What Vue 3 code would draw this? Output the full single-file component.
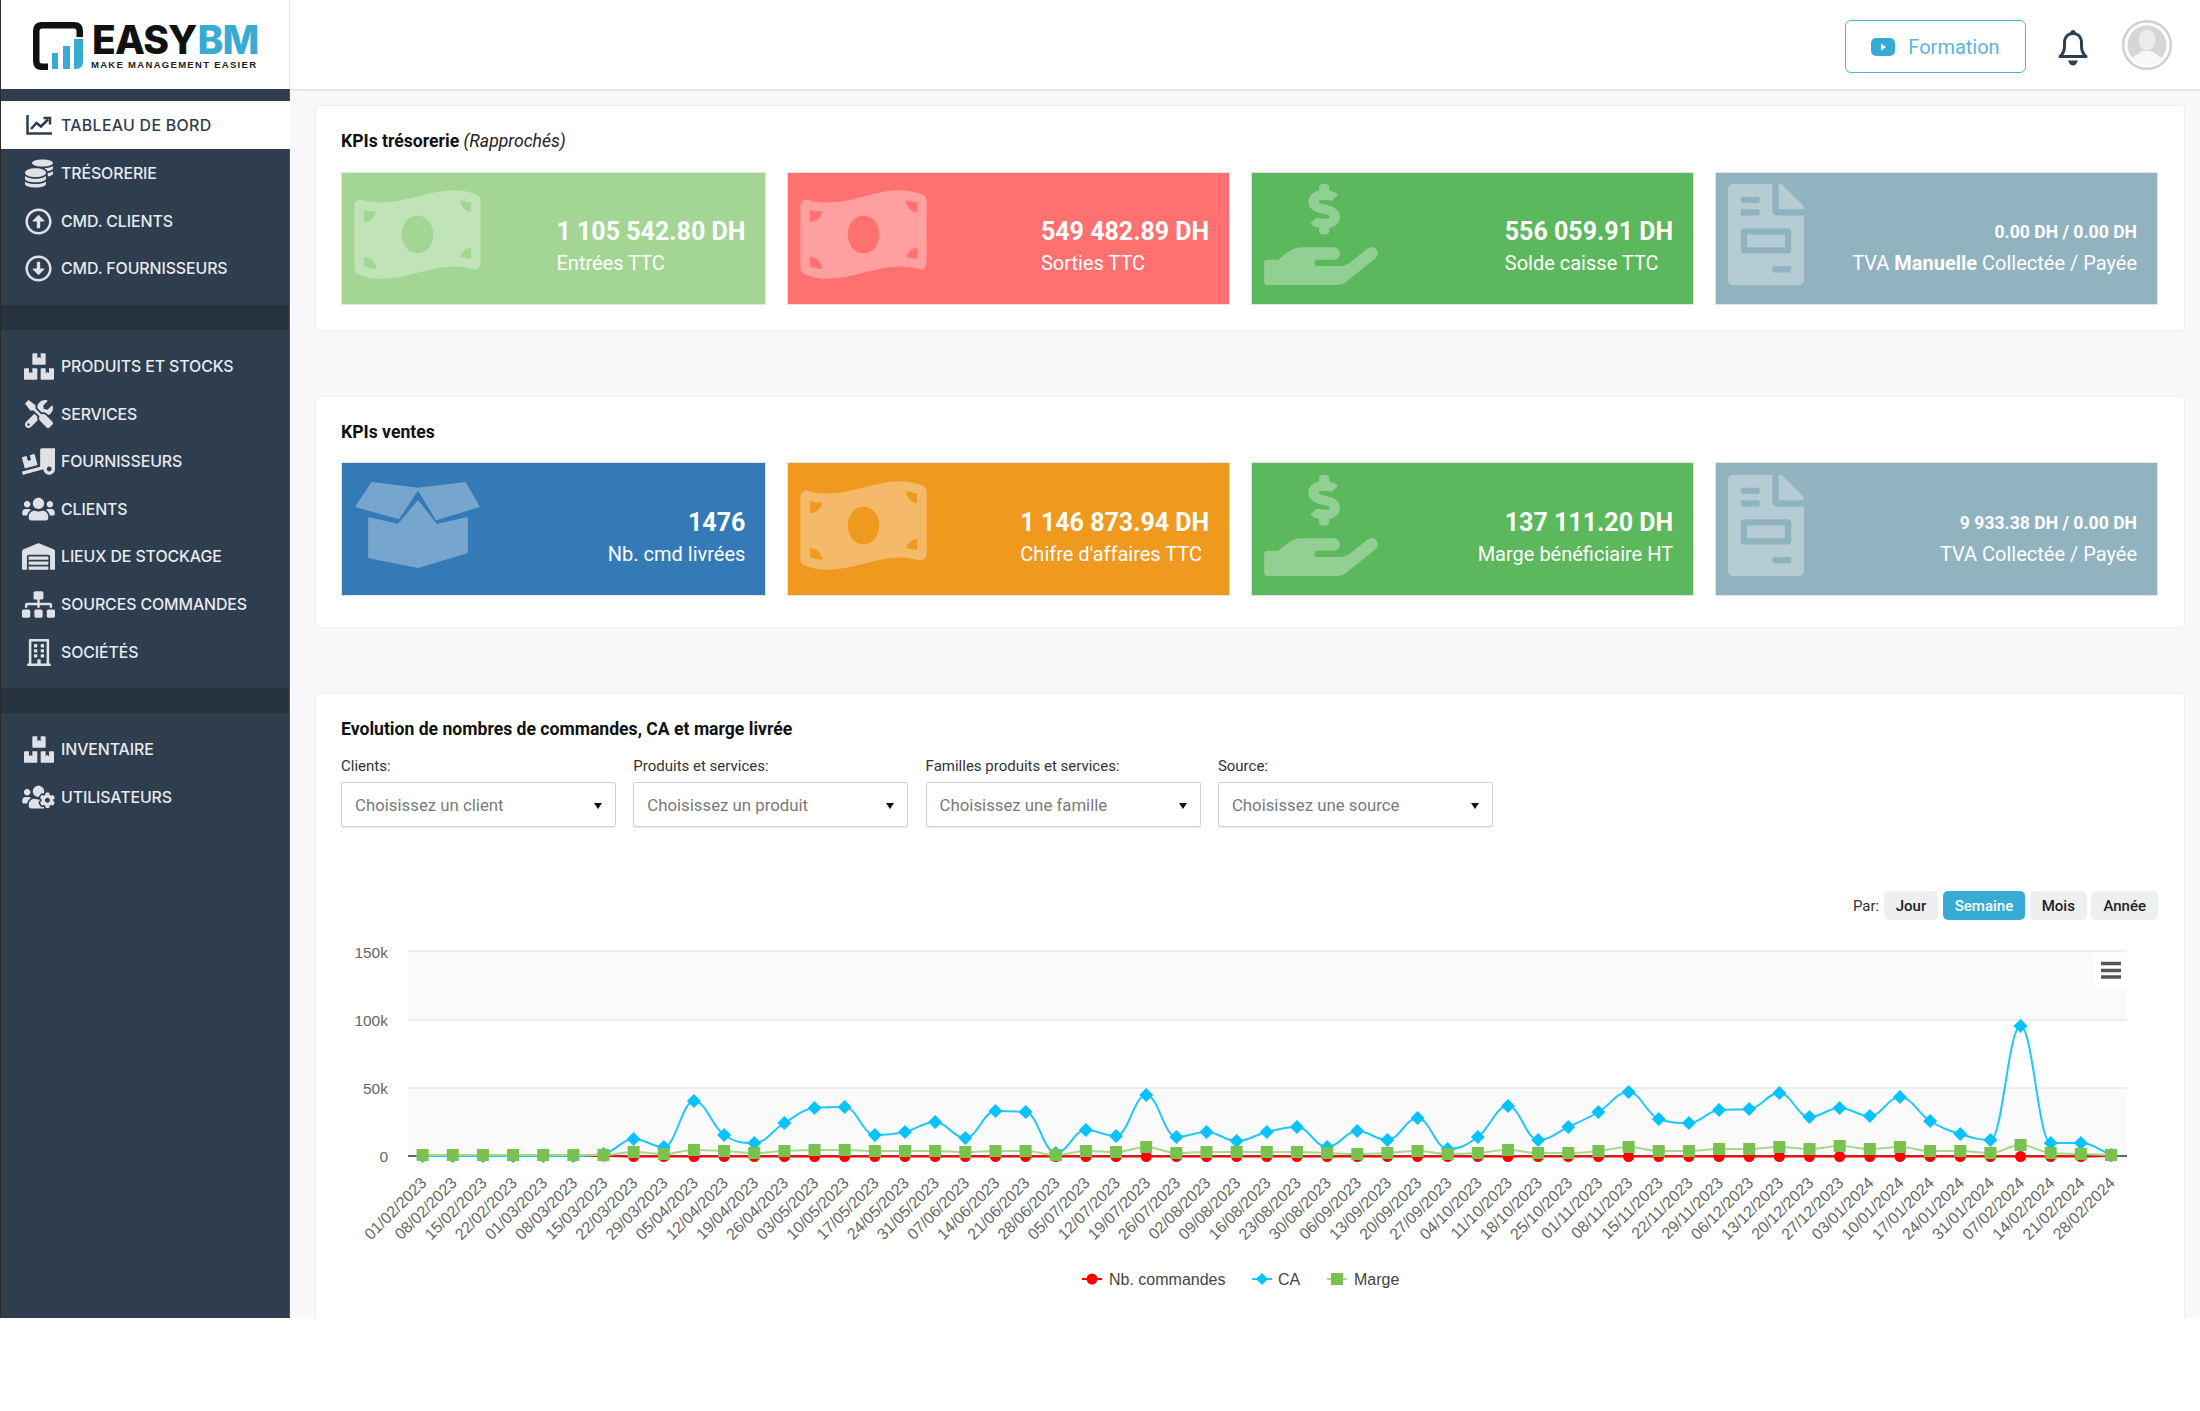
<script setup>
const P = {
  boxes: ['0 0 576 512', 'M560 288h-80v96l-32-21.3-32 21.3v-96h-80c-8.8 0-16 7.2-16 16v192c0 8.8 7.2 16 16 16h224c8.8 0 16-7.2 16-16V304c0-8.8-7.2-16-16-16zm-384-64h224c8.8 0 16-7.2 16-16V16c0-8.8-7.2-16-16-16h-80v96l-32-21.3L256 96V0h-80c-8.8 0-16 7.2-16 16v192c0 8.8 7.2 16 16 16zm64 64h-80v96l-32-21.3L96 384v-96H16c-8.8 0-16 7.2-16 16v192c0 8.8 7.2 16 16 16h224c8.8 0 16-7.2 16-16V304c0-8.8-7.2-16-16-16z'],
  coins: ['0 0 512 512', 'M0 405.3V448c0 35.3 86 64 192 64s192-28.7 192-64v-42.7C342.7 434.4 267.2 448 192 448S41.3 434.4 0 405.3zM320 128c106 0 192-28.7 192-64S426 0 320 0 128 28.7 128 64s86 64 192 64zM0 300.4V352c0 35.3 86 64 192 64s192-28.7 192-64v-51.6c-41.3 34-116.9 51.6-192 51.6S41.3 334.4 0 300.4zm416 11c57.3-11.1 96-31.7 96-55.4v-42.7c-23.2 16.4-57.3 27.6-96 34.5v63.6zM192 160C86 160 0 195.8 0 240s86 80 192 80 192-35.8 192-80-86-80-192-80zm219.3 56.3c60-10.8 100.7-32 100.7-56.3v-42.7c-35.5 25.1-96.5 38.6-160.7 41.8 29.5 14.3 51.2 33.5 60 57.2z'],
  up: ['0 0 512 512', 'M256 504c137 0 248-111 248-248S393 8 256 8 8 119 8 256s111 248 248 248zm0-448c110.5 0 200 89.5 200 200s-89.5 200-200 200S56 366.5 56 256 145.5 56 256 56zm20 328h-40c-6.6 0-12-5.4-12-12V256h-67c-10.7 0-16-12.9-8.5-20.5l99-99c4.7-4.7 12.3-4.7 17 0l99 99c7.6 7.6 2.2 20.5-8.5 20.5h-67v116c0 6.6-5.4 12-12 12z'],
  down: ['0 0 512 512', 'M256 8C119 8 8 119 8 256s111 248 248 248 248-111 248-248S393 8 256 8zm0 448c-110.5 0-200-89.5-200-200S145.5 56 256 56s200 89.5 200 200-89.5 200-200 200zm-20-328h40c6.6 0 12 5.4 12 12v116h67c10.7 0 16 12.9 8.5 20.5l-99 99c-4.7 4.7-12.3 4.7-17 0l-99-99c-7.6-7.6-2.2-20.5 8.5-20.5h67V140c0-6.6 5.4-12 12-12z'],
  tools: ['0 0 512 512', 'M501.1 395.7L384 278.6c-23.1-23.1-57.6-27.6-85.4-13.9L192 158.1V96L64 0 0 64l96 128h62.1l106.6 106.6c-13.6 27.8-9.2 62.3 13.9 85.4l117.1 117.1c14.6 14.6 38.2 14.6 52.7 0l52.7-52.7c14.5-14.6 14.5-38.2 0-52.7zM331.7 225c28.3 0 54.9 11 74.9 31l19.4 19.4c15.8-6.9 30.8-16.5 43.8-29.5 37.1-37.1 49.7-89.3 37.9-136.7-2.2-9-13.5-12.1-20.1-5.5l-74.4 74.4-67.9-11.3L334 98.9l74.4-74.4c6.6-6.6 3.4-17.9-5.7-20.2-47.4-11.7-99.6.9-136.6 37.9-28.5 28.5-41.9 66.1-41.2 103.6l82.1 82.1c8.1-1.9 16.5-2.9 24.7-2.9zm-103.9 82l-56.7-56.7L18.7 402.8c-25 25-25 65.5 0 90.5s65.5 25 90.5 0l123.6-123.6c-7.6-19.9-9.9-41.6-5-62.7zM64 472c-13.2 0-24-10.8-24-24 0-13.3 10.7-24 24-24s24 10.7 24 24c0 13.2-10.7 24-24 24z'],
  dolly: ['0 0 640 512', 'M50.2 375.6c2.3 8.5 11.1 13.6 19.6 11.3l216.4-58c8.5-2.3 13.6-11.1 11.3-19.6l-49.7-185.5c-2.3-8.5-11.1-13.6-19.6-11.3L151 133.3l24.8 92.7-61.8 16.5-24.8-92.7-77.3 20.7C3.4 172.8-1.7 181.6.6 190.1l49.6 185.5zM384 0c-17.7 0-32 14.3-32 32v323.6L5.9 450c-4.3 1.2-6.8 5.6-5.6 9.8l12.6 46.3c1.2 4.3 5.6 6.8 9.8 5.6l393.7-107.4C418.8 464.1 467.6 512 528 512c61.9 0 112-50.1 112-112V0H384zm144 448c-26.5 0-48-21.5-48-48s21.5-48 48-48 48 21.5 48 48-21.5 48-48 48z'],
  users: ['0 0 640 512', 'M96 224c35.3 0 64-28.7 64-64s-28.7-64-64-64-64 28.7-64 64 28.7 64 64 64zm448 0c35.3 0 64-28.7 64-64s-28.7-64-64-64-64 28.7-64 64 28.7 64 64 64zm32 32h-64c-17.6 0-33.5 7.1-45.1 18.6 40.3 22.1 68.9 62 75.1 109.4h66c17.7 0 32-14.3 32-32v-32c0-35.3-28.7-64-64-64zm-256 0c61.9 0 112-50.1 112-112S381.9 32 320 32 208 82.1 208 144s50.1 112 112 112zm76.8 32h-8.3c-20.8 10-43.9 16-68.5 16s-47.6-6-68.5-16h-8.3C179.6 288 128 339.6 128 403.2V432c0 26.5 21.5 48 48 48h288c26.5 0 48-21.5 48-48v-28.8c0-63.6-51.6-115.2-115.2-115.2zm-223.7-13.4C161.5 263.1 145.6 256 128 256H64c-35.3 0-64 28.7-64 64v32c0 17.7 14.3 32 32 32h65.9c6.3-47.4 34.9-87.3 75.2-109.4z'],
  warehouse: ['0 0 640 512', 'M504 352H136.4c-4.4 0-8 3.6-8 8l-.1 48c0 4.4 3.6 8 8 8H504c4.4 0 8-3.6 8-8v-48c0-4.4-3.6-8-8-8zm0 96H136.1c-4.4 0-8 3.6-8 8l-.1 48c0 4.4 3.6 8 8 8h368c4.4 0 8-3.6 8-8v-48c0-4.4-3.6-8-8-8zm0-192H136.6c-4.4 0-8 3.6-8 8l-.1 48c0 4.4 3.6 8 8 8H504c4.4 0 8-3.6 8-8v-48c0-4.4-3.6-8-8-8zm106.5-139L338.4 3.7a48.15 48.15 0 0 0-36.9 0L29.5 117C11.7 124.5 0 141.9 0 161.3V504c0 4.4 3.6 8 8 8h80c4.4 0 8-3.6 8-8V256c0-17.6 14.6-32 32.6-32h382.8c18 0 32.6 14.4 32.6 32v248c0 4.4 3.6 8 8 8h80c4.4 0 8-3.6 8-8V161.3c0-19.4-11.7-36.8-29.5-44.3z'],
  sitemap: ['0 0 640 512', 'M128 352H32c-17.67 0-32 14.33-32 32v96c0 17.67 14.33 32 32 32h96c17.67 0 32-14.33 32-32v-96c0-17.67-14.33-32-32-32zm-24-80h192v48h48v-48h192v48h48v-57.59c0-21.17-17.23-38.41-38.41-38.41H344v-64h40c17.67 0 32-14.33 32-32V32c0-17.67-14.33-32-32-32H256c-17.67 0-32 14.33-32 32v96c0 17.67 14.33 32 32 32h40v64H94.41C73.23 224 56 241.23 56 262.41V320h48v-48zm264 80h-96c-17.67 0-32 14.33-32 32v96c0 17.67 14.33 32 32 32h96c17.67 0 32-14.33 32-32v-96c0-17.67-14.33-32-32-32zm240 0h-96c-17.67 0-32 14.33-32 32v96c0 17.67 14.33 32 32 32h96c17.67 0 32-14.33 32-32v-96c0-17.67-14.33-32-32-32z'],
  building: ['0 0 448 512', 'M128 148v-40c0-6.6 5.4-12 12-12h40c6.6 0 12 5.4 12 12v40c0 6.6-5.4 12-12 12h-40c-6.6 0-12-5.4-12-12zm140 12h40c6.6 0 12-5.4 12-12v-40c0-6.6-5.4-12-12-12h-40c-6.6 0-12 5.4-12 12v40c0 6.6 5.4 12 12 12zm-128 96h40c6.6 0 12-5.4 12-12v-40c0-6.6-5.4-12-12-12h-40c-6.6 0-12 5.4-12 12v40c0 6.6 5.4 12 12 12zm128 0h40c6.6 0 12-5.4 12-12v-40c0-6.6-5.4-12-12-12h-40c-6.6 0-12 5.4-12 12v40c0 6.6 5.4 12 12 12zm-76 84v-40c0-6.6-5.4-12-12-12h-40c-6.6 0-12 5.4-12 12v40c0 6.6 5.4 12 12 12h40c6.6 0 12-5.4 12-12zm76 12h40c6.6 0 12-5.4 12-12v-40c0-6.6-5.4-12-12-12h-40c-6.6 0-12 5.4-12 12v40c0 6.6 5.4 12 12 12zm180 124v36H0v-36c0-6.6 5.4-12 12-12h19.5V24c0-13.3 10.7-24 24-24h337c13.3 0 24 10.7 24 24v440H436c6.6 0 12 5.4 12 12zM79.5 463H192v-67c0-6.6 5.4-12 12-12h40c6.6 0 12 5.4 12 12v67h112.5V49L80 48l-.5 415z'],
  userscog: ['0 0 640 512', 'M610.5 341.3c2.6-14.1 2.6-28.5 0-42.6l25.8-14.9c3-1.7 4.3-5.2 3.3-8.5-6.7-21.6-18.2-41.2-33.2-57.4-2.3-2.5-6-3.1-9-1.4l-25.8 14.9c-10.9-9.3-23.4-16.5-36.9-21.3v-29.8c0-3.4-2.4-6.4-5.7-7.1-22.3-5-45-4.8-66.2 0-3.3.7-5.7 3.7-5.7 7.1v29.8c-13.5 4.8-26 12-36.9 21.3l-25.8-14.9c-2.9-1.7-6.7-1.1-9 1.4-15 16.2-26.5 35.8-33.2 57.4-1 3.3.4 6.8 3.3 8.5l25.8 14.9c-2.6 14.1-2.6 28.5 0 42.6l-25.8 14.9c-3 1.7-4.3 5.2-3.3 8.5 6.7 21.6 18.2 41.1 33.2 57.4 2.3 2.5 6 3.1 9 1.4l25.8-14.9c10.9 9.3 23.4 16.5 36.9 21.3v29.8c0 3.4 2.4 6.4 5.7 7.1 22.3 5 45 4.8 66.2 0 3.3-.7 5.7-3.7 5.7-7.1v-29.8c13.5-4.8 26-12 36.9-21.3l25.8 14.9c2.9 1.7 6.7 1.1 9-1.4 15-16.2 26.5-35.8 33.2-57.4 1-3.3-.4-6.8-3.3-8.5l-25.8-14.9zM496 368.5c-26.8 0-48.5-21.8-48.5-48.5s21.8-48.5 48.5-48.5 48.5 21.8 48.5 48.5-21.7 48.5-48.5 48.5zM96 224c35.3 0 64-28.7 64-64s-28.7-64-64-64-64 28.7-64 64 28.7 64 64 64zm224 32c1.9 0 3.7-.5 5.6-.6 8.3-21.7 20.5-42.1 36.3-59.2 7.4-8 17.9-12.6 28.9-12.6 6.9 0 13.7 1.8 19.6 5.3l7.9 4.6c.8-.5 1.6-.9 2.4-1.4 7-14.6 11.2-30.8 11.2-48 0-61.9-50.1-112-112-112S208 82.1 208 144c0 61.9 50.1 112 112 112zm105.2 194.5c-2.3-1.2-4.6-2.6-6.8-3.9-8.2 4.8-15.3 9.8-27.5 9.8-10.9 0-21.4-4.6-28.9-12.6-18.3-19.8-32.3-43.9-40.2-69.6-10.7-34.5 24.9-49.7 25.8-50.3-.1-2.6-.1-5.2 0-7.8l-7.9-4.6c-3.8-2.2-7-5-9.8-8.1-3.3.2-6.5.6-9.8.6-24.6 0-47.6-6-68.5-16h-8.3C179.6 288 128 339.6 128 403.2V432c0 26.5 21.5 48 48 48h255.4c-3.7-6-6.2-12.8-6.2-20.3v-9.2zM173.1 274.6C161.5 263.1 145.6 256 128 256H64c-35.3 0-64 28.7-64 64v32c0 17.7 14.3 32 32 32h65.9c6.3-47.4 34.9-87.3 75.2-109.4z'],
  money: ['0 0 640 512', 'M621.16 54.46C582.37 38.19 543.55 32 504.75 32c-123.17-.01-246.33 62.34-369.5 62.34-30.89 0-61.76-3.92-92.65-13.72-3.47-1.1-6.95-1.62-10.35-1.62C15.04 79 0 92.32 0 110.81v317.26c0 12.63 7.23 24.6 18.84 29.46C57.63 473.81 96.45 480 135.25 480c123.17 0 246.34-62.35 369.51-62.35 30.89 0 61.76 3.92 92.65 13.72 3.47 1.1 6.95 1.62 10.35 1.62 17.21 0 32.25-13.32 32.25-31.81V83.93c-.01-12.64-7.24-24.6-18.85-29.47zM48 132.22c20.12 5.04 41.12 7.57 62.72 8.93C104.84 170.54 79 192.69 48 192.69v-60.47zm0 285v-47.78c34.37 0 62.18 27.27 63.71 61.4-22.53-1.81-43.59-6.31-63.71-13.62zM320 352c-44.19 0-80-42.99-80-96 0-53.02 35.82-96 80-96s80 42.98 80 96c0 53.03-35.83 96-80 96zm272 27.78c-17.52-4.39-35.71-6.85-54.32-8.44 5.87-26.08 27.5-45.88 54.32-49.28v57.72zm0-236.11c-30.89-3.91-54.86-29.7-55.81-61.55 19.54 2.17 38.09 6.23 55.81 12.66v48.89z'],
  hand: ['0 0 576 512', 'M271.06,144.3l54.27,14.3a8.59,8.59,0,0,1,6.63,8.1c0,4.6-4.09,8.4-9.12,8.4h-35.6a30,30,0,0,1-11.19-2.2c-5.24-2.2-11.28-1.7-15.3,2l-19,17.5a11.68,11.68,0,0,0-2.25,2.66,11.42,11.42,0,0,0,3.88,15.74,83.77,83.77,0,0,0,34.51,11.5V240c0,8.8,7.83,16,17.37,16h17.37c9.55,0,17.38-7.2,17.38-16V222.4c32.93-3.6,57.84-31,53.5-63-3.15-23-22.46-41.3-46.56-47.7L282.68,97.4a8.59,8.59,0,0,1-6.63-8.1c0-4.6,4.09-8.4,9.12-8.4h35.6A30,30,0,0,1,332,83.1c5.23,2.2,11.28,1.7,15.3-2l19-17.5A11.31,11.31,0,0,0,368.47,61a11.43,11.43,0,0,0-3.84-15.78,83.82,83.82,0,0,0-34.52-11.5V16c0-8.8-7.82-16-17.37-16H295.37C285.82,0,278,7.2,278,16V33.6c-32.89,3.6-57.85,31-53.51,63C227.63,119.6,247,137.9,271.06,144.3ZM565.27,328.1c-11.8-10.7-30.2-10-42.6,0L430.27,402a63.64,63.64,0,0,1-40,14H272a16,16,0,0,1,0-32h78.29c15.9,0,30.71-10.9,33.25-26.6a31.2,31.2,0,0,0,.46-5.46A32,32,0,0,0,352,320H192a117.66,117.66,0,0,0-74.1,26.29L71.4,384H16A16,16,0,0,0,0,400v96a16,16,0,0,0,16,16H372.77a64,64,0,0,0,40-14L564,377a32,32,0,0,0,1.27-48.9Z'],
  file: ['0 0 384 512', 'M288 256H96v64h192v-64zm89-151L279.1 7c-4.5-4.5-10.6-7-17-7H256v128h128v-6.1c0-6.3-2.5-12.4-7-16.9zm-153 31V0H24C10.7 0 0 10.7 0 24v464c0 13.3 10.7 24 24 24h336c13.3 0 24-10.7 24-24V160H248c-13.2 0-24-10.8-24-24zM64 72c0-4.42 3.58-8 8-8h80c4.42 0 8 3.58 8 8v16c0 4.42-3.58 8-8 8H72c-4.42 0-8-3.58-8-8V72zm0 64c0-4.42 3.58-8 8-8h80c4.42 0 8 3.58 8 8v16c0 4.42-3.58 8-8 8H72c-4.42 0-8-3.58-8-8v-16zm256 304c0 4.42-3.58 8-8 8h-80c-4.42 0-8-3.58-8-8v-16c0-4.42 3.58-8 8-8h80c4.42 0 8 3.58 8 8v16zm0-200v96c0 8.84-7.16 16-16 16H80c-8.84 0-16-7.16-16-16v-96c0-8.84 7.16-16 16-16h224c8.84 0 16 7.16 16 16z'],
}

const group1 = [
  { label: 'TRÉSORERIE', icon: 'coins', w: 28, h: 29 },
  { label: 'CMD. CLIENTS', icon: 'up', w: 27, h: 27 },
  { label: 'CMD. FOURNISSEURS', icon: 'down', w: 27, h: 27 },
]
const group2 = [
  { label: 'PRODUITS ET STOCKS', icon: 'boxes', w: 30, h: 27 },
  { label: 'SERVICES', icon: 'tools', w: 28, h: 28 },
  { label: 'FOURNISSEURS', icon: 'dolly', w: 33, h: 27 },
  { label: 'CLIENTS', icon: 'users', w: 33, h: 26 },
  { label: 'LIEUX DE STOCKAGE', icon: 'warehouse', w: 33, h: 27 },
  { label: 'SOURCES COMMANDES', icon: 'sitemap', w: 33, h: 27 },
  { label: 'SOCIÉTÉS', icon: 'building', w: 24, h: 27 },
]
const group3 = [
  { label: 'INVENTAIRE', icon: 'boxes', w: 30, h: 27 },
  { label: 'UTILISATEURS', icon: 'userscog', w: 33, h: 26 },
]

const tiles1 = [
  { value: '1 105 542.80 DH', label: 'Entrées TTC', color: 'lightgreen', icon: 'money', w: 127, h: 101, align: 'left' },
  { value: '549 482.89 DH', label: 'Sorties TTC', color: 'red', icon: 'money', w: 127, h: 101, align: 'left' },
  { value: '556 059.91 DH', label: 'Solde caisse TTC', color: 'green', icon: 'hand', w: 114, h: 101, align: 'left' },
  { value: '0.00 DH / 0.00 DH', pre: 'TVA ', strong: 'Manuelle', post: ' Collectée / Payée', color: 'slate', icon: 'file', w: 76, h: 101, align: 'right', small: true },
]
const tiles2 = [
  { value: '1476', label: 'Nb. cmd livrées', color: 'blue', icon: 'box', w: 127, h: 88, align: 'right' },
  { value: '1 146 873.94 DH', label: "Chifre d'affaires TTC", color: 'orange', icon: 'money', w: 127, h: 101, align: 'left' },
  { value: '137 111.20 DH', label: 'Marge bénéficiaire HT', color: 'green', icon: 'hand', w: 114, h: 101, align: 'right' },
  { value: '9 933.38 DH / 0.00 DH', label: 'TVA Collectée / Payée', color: 'slate', icon: 'file', w: 76, h: 101, align: 'right', small: true },
]
const panels = [
  { id: 'a', title: 'KPIs trésorerie', note: 'Rapprochés', tiles: tiles1 },
  { id: 'b', title: 'KPIs ventes', tiles: tiles2 },
]

const filters = [
  { label: 'Clients:', placeholder: 'Choisissez un client' },
  { label: 'Produits et services:', placeholder: 'Choisissez un produit' },
  { label: 'Familles produits et services:', placeholder: 'Choisissez une famille' },
  { label: 'Source:', placeholder: 'Choisissez une source' },
]
const periods = [
  { label: 'Jour' },
  { label: 'Semaine', active: true },
  { label: 'Mois' },
  { label: 'Année' },
]

const dates = ['01/02/2023','08/02/2023','15/02/2023','22/02/2023','01/03/2023','08/03/2023','15/03/2023','22/03/2023','29/03/2023','05/04/2023','12/04/2023','19/04/2023','26/04/2023','03/05/2023','10/05/2023','17/05/2023','24/05/2023','31/05/2023','07/06/2023','14/06/2023','21/06/2023','28/06/2023','05/07/2023','12/07/2023','19/07/2023','26/07/2023','02/08/2023','09/08/2023','16/08/2023','23/08/2023','30/08/2023','06/09/2023','13/09/2023','20/09/2023','27/09/2023','04/10/2023','11/10/2023','18/10/2023','25/10/2023','01/11/2023','08/11/2023','15/11/2023','22/11/2023','29/11/2023','06/12/2023','13/12/2023','20/12/2023','27/12/2023','03/01/2024','10/01/2024','17/01/2024','24/01/2024','31/01/2024','07/02/2024','14/02/2024','21/02/2024','28/02/2024']
const X0 = 422.6
const STEP = (2111 - 422.6) / 56
const xs = dates.map((_, i) => X0 + i * STEP)
const ca = [1156,1156,1156,1156,1156,1156,1154,1139,1147,1101,1135,1143,1123,1108,1107,1135,1132,1122,1138,1111,1112,1153,1130,1136,1095,1137,1132,1141,1132,1127,1147,1131,1140,1118,1149,1137,1106,1140,1127,1112,1092,1119,1123,1110,1109,1093,1117,1108,1116,1097,1121,1134,1140,1026,1143,1143,1155]
const marge = [1155,1155,1155,1155,1155,1155,1155,1152,1154,1150,1151,1153,1151,1150,1150,1151,1151,1151,1152,1151,1151,1155,1151,1152,1147,1153,1152,1152,1152,1152,1153,1154,1153,1151,1154,1153,1150,1153,1153,1151,1147,1151,1151,1149,1149,1147,1149,1146,1149,1147,1151,1151,1153,1145,1153,1154,1155]
const nb = dates.map((_, i) => (i < 7 || i === 56 ? 1156 : 1156.5))

function spline(ys) {
  const s = 1.5
  const d = s + 1
  const seg = []
  let prevR = null
  xs.forEach((x, i) => {
    const y = ys[i]
    const lx0 = i > 0 ? xs[i - 1] : x
    const ly0 = i > 0 ? ys[i - 1] : y
    const nx = i < xs.length - 1 ? xs[i + 1] : x
    const ny = i < xs.length - 1 ? ys[i + 1] : y
    let lx = (s * x + lx0) / d
    let ly = (s * y + ly0) / d
    let rx = (s * x + nx) / d
    let ry = (s * y + ny) / d
    if (rx !== lx) {
      const c = ((ry - ly) * (rx - x)) / (rx - lx) + y - ry
      ly += c
      ry += c
    }
    if (ly > ly0 && ly > y) { ly = Math.max(ly0, y); ry = 2 * y - ly }
    else if (ly < ly0 && ly < y) { ly = Math.min(ly0, y); ry = 2 * y - ly }
    if (ry > ny && ry > y) { ry = Math.max(ny, y); ly = 2 * y - ry }
    else if (ry < ny && ry < y) { ry = Math.min(ny, y); ly = 2 * y - ry }
    if (i === 0) seg.push(`M${x.toFixed(1)} ${y}`)
    else seg.push(`C${prevR[0].toFixed(1)} ${prevR[1].toFixed(1)} ${lx.toFixed(1)} ${ly.toFixed(1)} ${x.toFixed(1)} ${y}`)
    prevR = [rx, ry]
  })
  return seg.join(' ')
}
const caPath = spline(ca)
const margePath = spline(marge)
const nbPath = spline(nb)
const caPts = xs.map((x, i) => ({ x, y: ca[i] }))
const margePts = xs.map((x, i) => ({ x, y: marge[i] }))
const nbPts = xs.map((x, i) => ({ x, y: nb[i] }))
const labels = dates.map((text, i) => ({ text, x: xs[i] + 5, y: 1184 }))
const diamond = (x, y, r = 7) => `${x},${y - r} ${x + r},${y} ${x},${y + r} ${x - r},${y}`
const yAxis = [
  { t: '150k', y: 958 },
  { t: '100k', y: 1026 },
  { t: '50k', y: 1094 },
  { t: '0', y: 1162 },
]
const grid = [951, 1020, 1088]
</script>

<template>
  <div class="app">
    <aside class="sidebar">
      <div class="logo">
        <svg class="logo-mark" width="50" height="48" viewBox="0 0 50 48">
          <path d="M15 44.750H9Q3.250 44.750 3.250 39V9Q3.250 3.250 9 3.250H41Q46.750 3.250 46.750 9V15" fill="none" stroke="#111" stroke-width="6.500"/>
          <rect x="19" y="31" width="6" height="16" fill="#37abd3"/>
          <rect x="30" y="24" width="7" height="23" fill="#37abd3"/>
          <path d="M41 17H50V40Q50 47 43 47H41Z" fill="#37abd3"/>
        </svg>
        <div class="logo-text">
          <div class="logo-name"><span>EASY</span><span class="logo-bm">BM</span></div>
          <div class="logo-tag">MAKE MANAGEMENT EASIER</div>
        </div>
      </div>
      <nav class="nav">
        <div class="nav-active">
          <span class="nav-icon">
            <svg width="26" height="20" viewBox="0 0 26 20" fill="none" stroke="#2e3e4f">
              <path d="M1.500 0V18.500H26" stroke-width="2.500"/>
              <path d="M5 14L10.500 8L15 11.500L22 4.500" stroke-width="2.500"/>
              <path d="M17.500 3H24V9.500" stroke-width="2.500"/>
            </svg>
          </span>
          <span>TABLEAU DE BORD</span>
        </div>
        <div class="nav-group first">
          <div v-for="it in group1" :key="it.label" class="nav-item">
            <span class="nav-icon"><svg :width="it.w" :height="it.h" :viewBox="P[it.icon][0]"><path :d="P[it.icon][1]" fill="currentColor"/></svg></span>
            <span>{{ it.label }}</span>
          </div>
        </div>
        <div class="nav-sep"></div>
        <div class="nav-group">
          <div v-for="it in group2" :key="it.label" class="nav-item">
            <span class="nav-icon"><svg :width="it.w" :height="it.h" :viewBox="P[it.icon][0]"><path :d="P[it.icon][1]" fill="currentColor"/></svg></span>
            <span>{{ it.label }}</span>
          </div>
        </div>
        <div class="nav-sep"></div>
        <div class="nav-group">
          <div v-for="it in group3" :key="it.label" class="nav-item">
            <span class="nav-icon"><svg :width="it.w" :height="it.h" :viewBox="P[it.icon][0]"><path :d="P[it.icon][1]" fill="currentColor"/></svg></span>
            <span>{{ it.label }}</span>
          </div>
        </div>
      </nav>
    </aside>

    <main class="main">
      <header class="topbar">
        <button class="formation">
          <svg width="24" height="18" viewBox="0 0 24 18">
            <rect width="24" height="18" rx="5" fill="#37abd3"/>
            <path d="M10 5.500L15 9L10 12.500Z" fill="#fff"/>
          </svg>
          <span>Formation</span>
        </button>
        <svg class="bell" width="32" height="36" viewBox="0 0 32 36">
          <circle cx="16" cy="2.500" r="2.500" fill="#2e3e4f"/>
          <path d="M3 26.500C6 24 7.500 21 7.500 16V13C7.500 7 11 3.500 16 3.500C21 3.500 24.500 7 24.500 13V16C24.500 21 26 24 29 26.500Z" fill="none" stroke="#2e3e4f" stroke-width="3" stroke-linejoin="round"/>
          <path d="M11 30.500H21C20 33.500 18 35.500 16 35.500S12 33.500 11 30.500Z" fill="#2e3e4f"/>
        </svg>
        <svg class="avatar" width="50" height="50" viewBox="0 0 50 50">
          <defs><clipPath id="avatar-disc"><circle cx="25" cy="25" r="19.500"/></clipPath></defs>
          <circle cx="25" cy="25" r="23.800" fill="#fff" stroke="#d0d0d0" stroke-width="2.400"/>
          <circle cx="25" cy="25" r="19.500" fill="#d6d6d6"/>
          <g clip-path="url(#avatar-disc)">
            <ellipse cx="25" cy="20" rx="8.500" ry="10.500" fill="#ececec"/>
            <path d="M5 46C6 37 15 36 20 31H30C35 36 44 37 45 46Z" fill="#f7f7f7"/>
          </g>
        </svg>
      </header>

      <div class="content">
        <section v-for="p in panels" :key="p.id" class="panel kpi" :class="p.id">
          <h2 class="title">{{ p.title }}<em v-if="p.note"> ({{ p.note }})</em></h2>
          <div class="tiles">
            <div v-for="(t, i) in p.tiles" :key="i" class="tile" :class="t.color">
              <svg v-if="t.icon === 'box'" class="tile-icon box" width="127" height="88" viewBox="-1 -1 129 90">
                <path d="M1 25L17 1L64 7L44 37Z M64 7L112 1L126 25L83 38Z M14 37L44 44L64 20L83 44L114 37V72L64 87L14 77Z" fill="#fff" stroke="#fff" stroke-width="2" stroke-linejoin="round"/>
              </svg>
              <svg v-else class="tile-icon" :width="t.w" :height="t.h" :viewBox="P[t.icon][0]"><path :d="P[t.icon][1]" fill="#fff"/></svg>
              <div class="tile-text" :class="t.align">
                <div class="tile-value" :class="{ small: t.small }">{{ t.value }}</div>
                <div class="tile-label">
                  <template v-if="t.strong">{{ t.pre }}<b>{{ t.strong }}</b>{{ t.post }}</template>
                  <template v-else>{{ t.label }}</template>
                </div>
              </div>
            </div>
          </div>
        </section>

        <section class="panel chart-panel">
          <h2 class="title">Evolution de nombres de commandes, CA et marge livrée</h2>
          <div class="filters">
            <div v-for="f in filters" :key="f.label" class="filter">
              <label>{{ f.label }}</label>
              <div class="select"><span>{{ f.placeholder }}</span><i class="caret"></i></div>
            </div>
          </div>
          <div class="periods">
            <span class="par">Par:</span>
            <button v-for="b in periods" :key="b.label" class="period" :class="{ active: b.active }">{{ b.label }}</button>
          </div>
          <svg class="chart" viewBox="341 930 1817 388" width="1817" height="388">
            <rect x="408" y="951" width="1719" height="69" fill="#fafafa"/>
            <rect x="408" y="1088" width="1719" height="68" fill="#fafafa"/>
            <line v-for="g in grid" :key="g" x1="408" x2="2127" :y1="g" :y2="g" stroke="#e9e9e9" stroke-width="1.500"/>
            <line x1="408" x2="2127" y1="1156" y2="1156" stroke="#333" stroke-width="1.500"/>
            <text v-for="a in yAxis" :key="a.t" x="388" :y="a.y" class="axis" text-anchor="end">{{ a.t }}</text>
            <text v-for="l in labels" :key="l.text" :x="l.x" :y="l.y" class="xlabel" text-anchor="end" :transform="`rotate(-45 ${l.x} ${l.y})`">{{ l.text }}</text>
            <path :d="nbPath" fill="none" stroke="#f00" stroke-width="2"/>
            <circle v-for="(q, i) in nbPts" :key="'n' + i" :cx="q.x" :cy="q.y" r="5.500" fill="#f00"/>
            <path :d="caPath" fill="none" stroke="#1fc8fb" stroke-width="2"/>
            <polygon v-for="(q, i) in caPts" :key="'c' + i" :points="diamond(q.x, q.y)" fill="#09c2fb"/>
            <path :d="margePath" fill="none" stroke="#a6d88e" stroke-width="2"/>
            <rect v-for="(q, i) in margePts" :key="'m' + i" :x="q.x - 6" :y="q.y - 6" width="12" height="12" fill="#79c24f"/>
            <rect x="2093" y="953" width="34" height="34" fill="#fff"/>
            <path d="M2101 963.500H2121M2101 970.500H2121M2101 977H2121" stroke="#555" stroke-width="3.500"/>
            <path d="M1082 1279H1102" stroke="#f00" stroke-width="2"/><circle cx="1092" cy="1279" r="5.500" fill="#f00"/>
            <text x="1109" y="1284.500" class="legend">Nb. commandes</text>
            <path d="M1252 1279H1272" stroke="#1fc8fb" stroke-width="2"/><polygon :points="diamond(1262, 1279, 6)" fill="#09c2fb"/>
            <text x="1278" y="1284.500" class="legend">CA</text>
            <path d="M1327 1279H1347" stroke="#a6d88e" stroke-width="2"/><rect x="1331" y="1273" width="12" height="12" fill="#79c24f"/>
            <text x="1354" y="1284.500" class="legend">Marge</text>
          </svg>
        </section>
      </div>
    </main>
  </div>
</template>

<style scoped>
.app {
  display: flex;
  height: 1318px;
  overflow: hidden;
  font-family: Roboto, "Liberation Sans", sans-serif;
  background: #fff;
}
.sidebar {
  width: 290px;
  flex: none;
  display: flex;
  flex-direction: column;
  border-left: 1px solid #2a2a2a;
  background: #2e3e4f;
  box-sizing: border-box;
}
.logo {
  height: 89px;
  flex: none;
  background: #fff;
  display: flex;
  align-items: flex-start;
  padding: 20px 0 0 32px;
  box-sizing: border-box;
  border-right: 1px solid #e5e5e5;
}
.logo-mark { flex: none; margin-top: 2px; }
.logo-text { display: flex; flex-direction: column; margin-left: 9px; }
.logo-name {
  font-family: Inter, sans-serif;
  font-weight: 800;
  font-size: 39px;
  line-height: 40px;
  letter-spacing: -.9px;
  color: #111;
  white-space: nowrap;
}
.logo-bm { color: #37abd3; margin-left: 1px; }
.logo-tag {
  font-family: "Liberation Sans", sans-serif;
  font-weight: 700;
  font-size: 9.500px;
  line-height: 10px;
  letter-spacing: 1.300px;
  color: #222;
  white-space: nowrap;
  margin-left: -1px;
}
.nav {
  flex: 1;
  padding-top: 12px;
  font-family: Inter, sans-serif;
  font-weight: 500;
  font-size: 15.900px;
  letter-spacing: -.1px;
  color: #e9ebef;
  border-right: 1px solid #46586a;
}
.nav-active {
  height: 48px;
  margin-right: -1px;
  background: #fff;
  color: #2e3e4f;
  display: flex;
  align-items: center;
  gap: 6px;
  padding-left: 21px;
  letter-spacing: .3px;
}
.nav-group { padding: 12.500px 0; }
.nav-group.first { padding-top: 1px; }
.nav-item {
  height: 47.600px;
  display: flex;
  align-items: center;
  gap: 6px;
  padding-left: 21px;
}
.nav-icon {
  width: 33px;
  display: flex;
  justify-content: center;
  color: #dfe1e6;
}
.nav-sep { height: 25px; background: #26333f; }
.main {
  flex: 1;
  min-width: 0;
  display: flex;
  flex-direction: column;
  background: #f8f8f8;
}
.topbar {
  height: 89px;
  flex: none;
  box-sizing: content-box;
  background: #fff;
  border-bottom: 2px solid #e9e9e9;
  display: flex;
  align-items: center;
  justify-content: flex-end;
  padding-right: 28px;
}
.formation {
  width: 181px;
  height: 53px;
  margin-right: 31px;
  margin-top: 4px;
  display: flex;
  align-items: center;
  justify-content: center;
  gap: 13px;
  background: #fff;
  border: 1.500px solid #4cb3d8;
  border-radius: 6px;
  color: #5bb5da;
  font-family: Roboto, sans-serif;
  font-size: 20px;
}
.bell { margin-right: 33px; margin-top: 7px; }
.avatar { margin-top: 1px; }
.content {
  padding: 14px 15px 0 25px;
  display: flex;
  flex-direction: column;
  gap: 65px;
}
.panel {
  background: #fff;
  border: 1px solid #eeeeee;
  border-radius: 4px;
  padding: 25px 26px 25px 25px;
}
.title {
  margin: 0;
  font-size: 17.600px;
  line-height: 20px;
  font-weight: 700;
  color: #111;
}
.title em { font-weight: 400; color: #222; }
.tiles {
  display: grid;
  grid-template-columns: 425fr 443fr 443fr 443fr;
  gap: 20.500px;
  margin-top: 21px;
}
.kpi.b { padding-bottom: 31px; }
.kpi.b .tiles { margin-top: 20px; }
.tile {
  height: 133px;
  box-sizing: border-box;
  border: 1px solid #e3e6e8;
  display: flex;
  align-items: center;
  justify-content: space-between;
  padding: 0 20px 8px 12px;
  color: #fff;
}
.b .tile { height: 134px; }
.tile-icon { opacity: .33; flex: none; }
.tile-text { margin-top: 25px; }
.b .tile-text { margin-top: 27px; }
.tile-text.left { text-align: left; }
.tile-text.right { text-align: right; }
.tile-value {
  font-size: 25px;
  line-height: 30px;
  font-weight: 700;
  white-space: nowrap;
}
.tile-value.small { font-size: 17.600px; font-weight: 700; }
.tile-label {
  margin-top: 1px;
  font-size: 20px;
  line-height: 30px;
  white-space: nowrap;
}
.lightgreen { background: #a3d695; }
.red { background: #ff7070; }
.green { background: #5cb85c; }
.slate { background: #91b3c0; }
.blue { background: #337ab7; }
.orange { background: #f0991f; }
.filters {
  display: flex;
  gap: 17.300px;
  margin-top: 18px;
}
.filter { width: 275px; }
.filter label {
  display: block;
  font-size: 15px;
  line-height: 18px;
  color: #333;
}
.select {
  margin-top: 7px;
  height: 45px;
  box-sizing: border-box;
  border: 1px solid #d2d2d2;
  border-radius: 2px;
  box-shadow: 0 1px 1px rgba(0,0,0,.08);
  display: flex;
  align-items: center;
  justify-content: space-between;
  padding: 0 13px;
  font-size: 16.800px;
  color: #7a7a7a;
}
.caret {
  width: 0;
  height: 0;
  border-left: 4px solid transparent;
  border-right: 4px solid transparent;
  border-top: 6px solid #111;
  margin-top: 3px;
}
.periods {
  display: flex;
  justify-content: flex-end;
  align-items: center;
  gap: 4.500px;
  margin-top: 64px;
}
.par { font-size: 15px; color: #333; }
.period {
  height: 29px;
  padding: 0 12px;
  border: 0;
  border-radius: 5px;
  background: #edeff1;
  color: #222;
  font-family: Roboto, sans-serif;
  font-size: 15px;
  font-weight: 500;
}
.period.active { background: #37abd3; color: #fff; }
.chart {
  display: block;
  margin-top: 10px;
}
.axis, .xlabel, .legend {
  font-family: "Liberation Sans", Arial, sans-serif;
  font-size: 16px;
}
.axis { fill: #666; font-size: 15.500px; }
.xlabel { fill: #666; }
.legend { fill: #444; }
</style>
